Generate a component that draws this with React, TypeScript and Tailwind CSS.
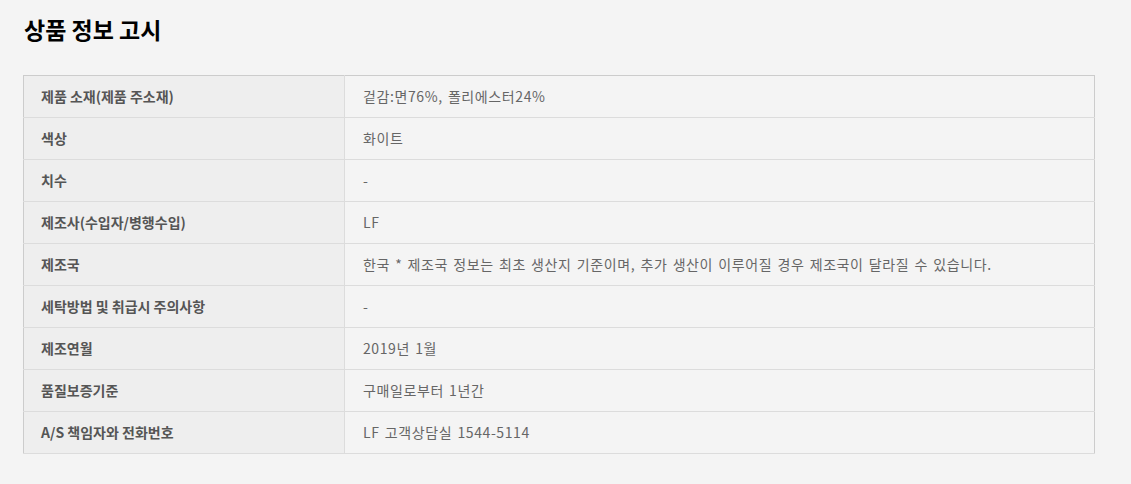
const rows: [string, string][] = [
  ["제품 소재(제품 주소재)", "겉감:면76%, 폴리에스터24%"],
  ["색상", "화이트"],
  ["치수", "-"],
  ["제조사(수입자/병행수입)", "LF"],
  ["제조국", "한국 * 제조국 정보는 최초 생산지 기준이며, 추가 생산이 이루어질 경우 제조국이 달라질 수 있습니다."],
  ["세탁방법 및 취급시 주의사항", "-"],
  ["제조연월", "2019년 1월"],
  ["품질보증기준", "구매일로부터 1년간"],
  ["A/S 책임자와 전화번호", "LF 고객상담실 1544-5114"],
];

export default function App() {
  return (
    <div
      className="min-h-[484px] w-[1131px] bg-[#f4f4f4] pl-[23px] pt-[12px]"
      style={{ fontFamily: '"Noto Sans CJK KR", "Noto Sans", sans-serif' }}
    >
      <h2 className="ml-px h-[34px] text-[23px] font-bold leading-[34px] text-black">
        상품 정보 고시
      </h2>
      <table className="mt-[29px] w-[1072px] border-collapse border border-[#cccccc]">
        <tbody>
          {rows.map(([label, value]) => (
            <tr key={label} className="h-[42px] border-b border-[#dcdcdc]">
              <th className="w-[321px] border-r border-[#dcdcdc] bg-[#eeeeee] pl-[17px] text-left text-[14px] font-bold text-[#555555]">
                {label}
              </th>
              <td className="pl-[18px] text-[14px] tracking-[0.6px] text-[#666666] [word-spacing:1.5px]">
                {value}
              </td>
            </tr>
          ))}
        </tbody>
      </table>
    </div>
  );
}
